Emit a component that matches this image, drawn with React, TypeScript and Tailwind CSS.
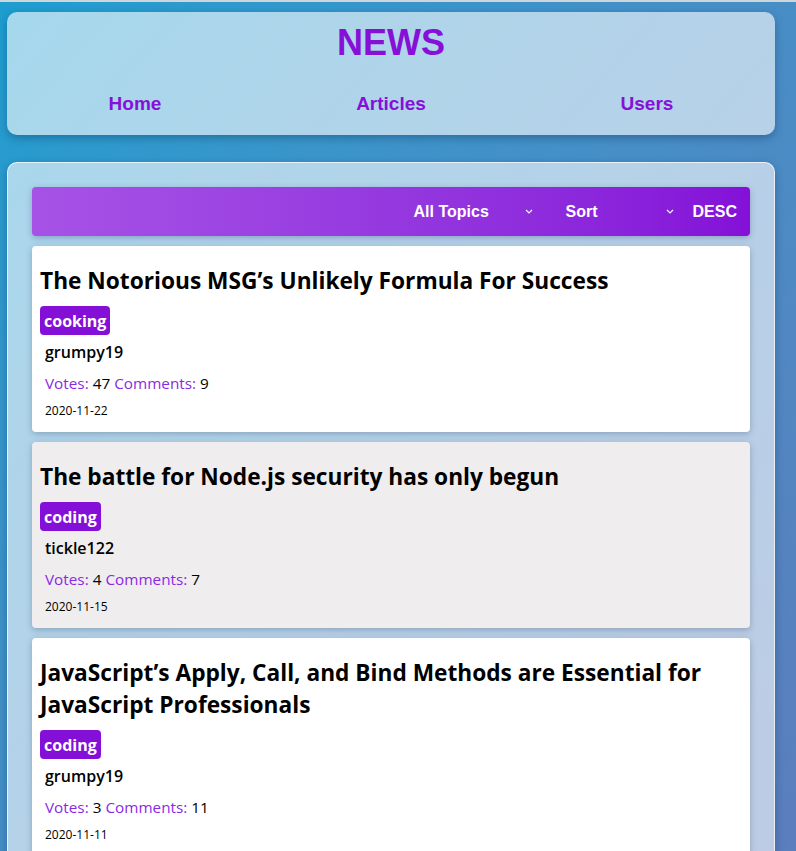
import React from 'react';

type Article = {
  title: string;
  topic: string;
  author: string;
  votes: number;
  comments: number;
  date: string;
};

const articles: Article[] = [
  {
    title: 'The Notorious MSG’s Unlikely Formula For Success',
    topic: 'cooking',
    author: 'grumpy19',
    votes: 47,
    comments: 9,
    date: '2020-11-22',
  },
  {
    title: 'The battle for Node.js security has only begun',
    topic: 'coding',
    author: 'tickle122',
    votes: 4,
    comments: 7,
    date: '2020-11-15',
  },
  {
    title: 'JavaScript’s Apply, Call, and Bind Methods are Essential for JavaScript Professionals',
    topic: 'coding',
    author: 'grumpy19',
    votes: 3,
    comments: 11,
    date: '2020-11-11',
  },
];

const Chevron: React.FC = () => (
  <svg width="8" height="5" viewBox="0 0 8 5" className="shrink-0">
    <path d="M1 1 L4 4 L7 1" fill="none" stroke="white" strokeWidth="1.2" />
  </svg>
);

const ArticleCard: React.FC<{ article: Article; shaded: boolean }> = ({ article, shaded }) => (
  <li
    className={`rounded-[4px] px-2 shadow-[0_2px_6px_rgba(40,60,90,0.3)] ${
      shaded ? 'bg-[#efedee]' : 'bg-white'
    }`}
  >
    <h2 className="pt-[19px] text-[22.7px] leading-8 font-bold text-black">{article.title}</h2>
    <span className="mt-[9px] inline-flex h-[29px] items-center rounded-[4px] bg-[#8410d8] px-[4px] text-[16px] font-bold text-white">
      {article.topic}
    </span>
    <p className="mt-[5px] pl-[5px] text-[16px] leading-6 font-semibold text-black">{article.author}</p>
    <p className="mt-[8px] pl-[5px] text-[15.3px] leading-[22px] text-black">
      <span className="text-[#8a2be2]">Votes:</span> {article.votes}{' '}
      <span className="text-[#8a2be2]">Comments:</span> {article.comments}
    </p>
    <p className="mt-[8px] pb-[12px] pl-[5px] text-[12px] leading-[18px] text-black">{article.date}</p>
  </li>
);

const App: React.FC = () => {
  return (
    <div
      className="min-h-[851px] border-t-2 border-[#cfd6da] bg-gradient-to-br from-[#1c9ed0] to-[#5c7dbc] pt-[10px] pb-6"
      style={{ fontFamily: '"Open Sans", sans-serif' }}
    >
      <header className="ml-[7px] w-[768px] h-[123px] rounded-[10px] bg-white/60 shadow-[0_3px_8px_rgba(0,40,80,0.35)]">
        <h1
          className="pt-[11px] text-center text-[36px] leading-[40px] font-bold text-[#8610d8]"
          style={{ fontFamily: '"Liberation Sans", Arial, sans-serif' }}
        >
          NEWS
        </h1>
        <nav className="mt-[29px]">
          <ul
            className="grid grid-cols-3 text-center text-[19px] leading-6 font-bold text-[#8610d8]"
            style={{ fontFamily: '"Liberation Sans", Arial, sans-serif' }}
          >
            <li>Home</li>
            <li>Articles</li>
            <li>Users</li>
          </ul>
        </nav>
      </header>

      <main className="ml-[7px] mt-[27px] w-[768px] rounded-[10px] border border-white/70 bg-white/60 px-[24px] pt-[24px] pb-6 shadow-[0_3px_8px_rgba(0,40,80,0.35)]">
        <div
          className="flex h-[49px] items-center justify-end rounded-[4px] bg-gradient-to-r from-[#a752e6] to-[#8410d8] pr-[13px] text-[16px] font-bold text-white shadow-[0_2px_6px_rgba(60,40,120,0.3)]"
          style={{ fontFamily: '"Liberation Sans", Arial, sans-serif' }}
        >
          <div className="flex w-[119px] items-center justify-between">
            <span>All Topics</span>
            <Chevron />
          </div>
          <div className="ml-[33px] flex w-[108px] items-center justify-between">
            <span>Sort</span>
            <Chevron />
          </div>
          <button className="ml-[19px] font-bold">DESC</button>
        </div>

        <ul className="mt-[10px] flex flex-col gap-[10px]">
          {articles.map((a, i) => (
            <ArticleCard key={a.title} article={a} shaded={i % 2 === 1} />
          ))}
        </ul>
      </main>
    </div>
  );
};

export default App;
